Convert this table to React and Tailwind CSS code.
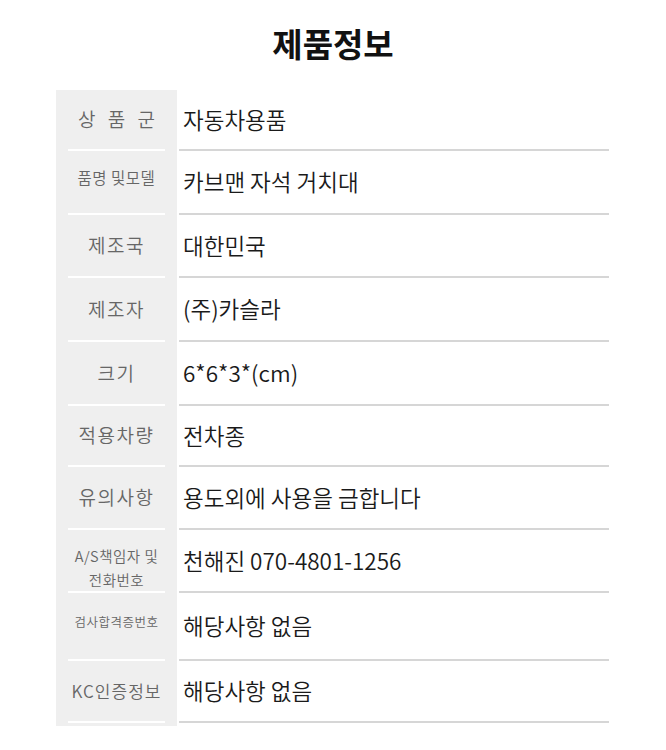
const rows = [
  { label: '상 품 군', value: '자동차용품', h: 'h-[61px]', size: 'text-[19px] tracking-[4px] pl-1' },
  { label: '품명 및모델', value: '카브맨 자석 거치대', h: 'h-[64px]', size: 'text-[15.5px] tracking-[0.5px] -translate-y-1' },
  { label: '제조국', value: '대한민국', h: 'h-[63px]', size: 'text-[19px] tracking-[1.5px]' },
  { label: '제조자', value: '(주)카슬라', h: 'h-[64px]', size: 'text-[19px] tracking-[1.5px]' },
  { label: '크기', value: '6*6*3*(cm)', h: 'h-[64px]', size: 'text-[19px] tracking-[1.5px]' },
  { label: '적용차량', value: '전차종', h: 'h-[61px]', size: 'text-[19px] tracking-[1.5px]' },
  { label: '유의사항', value: '용도외에 사용을 금합니다', h: 'h-[63px]', size: 'text-[19px] tracking-[1.5px]' },
  { label: ['A/S책임자 및', '전화번호'], value: '천해진 070-4801-1256', h: 'h-[63px]', size: 'text-[14.5px] tracking-[0.5px] leading-[24px] translate-y-[7px]' },
  { label: '검사합격증번호', value: '해당사항 없음', h: 'h-[68px]', size: 'text-[12.5px] tracking-[0.5px] -translate-y-1' },
  { label: 'KC인증정보', value: '해당사항 없음', h: 'h-[62px]', size: 'text-[17px] tracking-[1px]' },
]

function InfoRow({ label, value, h, size }) {
  return (
    <div className={`flex ${h}`}>
      <div className="w-[121px] bg-[#efefef] flex flex-col">
        <div className={`flex-1 flex flex-col items-center justify-center text-center text-[#666] font-[350] ${size}`}>
          {Array.isArray(label) ? label.map((l) => <span key={l}>{l}</span>) : label}
        </div>
        <div className="mx-3 h-[2px] bg-white" />
      </div>
      <div className="flex-1 ml-[2px] mr-[1px] flex flex-col">
        <div className="flex-1 flex items-center pl-1 text-[22.5px] text-[#1a1a1a] font-[350]">{value}</div>
        <div className="h-[2px] bg-[#d6d6d6]" />
      </div>
    </div>
  )
}

export default function App() {
  return (
    <div
      className="w-[666px] h-[750px] bg-white"
      style={{ fontFamily: '"Noto Sans CJK KR", "Noto Sans", sans-serif' }}
    >
      <div className="h-[90px] flex items-center justify-center text-[33px] font-bold text-[#111] -translate-y-px">
        제품정보
      </div>
      <div className="w-[554px] mx-auto">
        <div className="flex flex-col">
          {rows.map((r, i) => (
            <InfoRow key={i} {...r} />
          ))}
        </div>
        <div className="w-[121px] h-[3px] bg-[#efefef]" />
      </div>
    </div>
  )
}
